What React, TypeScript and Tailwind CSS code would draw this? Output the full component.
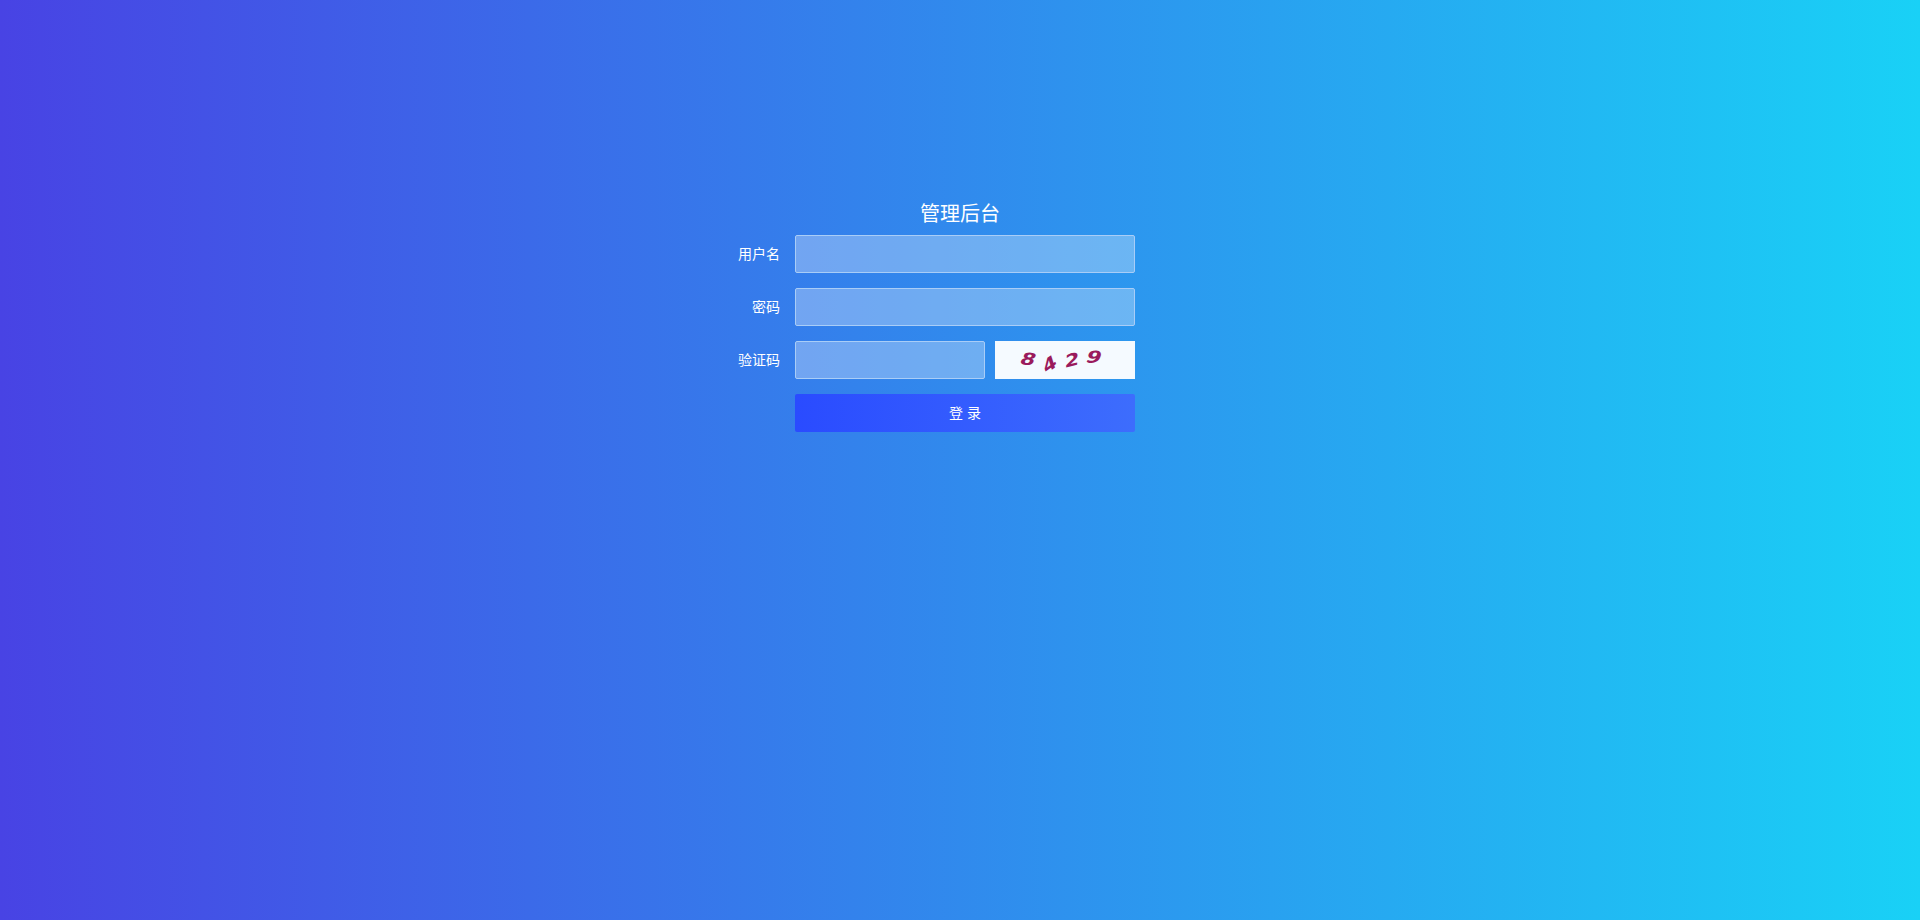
import React from 'react';

const FONT = { fontFamily: '"Liberation Sans", "Noto Sans CJK SC", sans-serif' };

function Captcha() {
  const chars = [
    { c: '8', cls: 'rotate-[6deg] translate-y-[0px]' },
    { c: '4', cls: '-rotate-[35deg] translate-y-[5px]' },
    { c: '2', cls: '-rotate-[14deg] translate-y-[1px]' },
    { c: '9', cls: 'rotate-[4deg] -translate-y-[2px]' },
  ];
  return (
    <div className="w-[140px] h-[38px] bg-[#f5faff] flex items-center justify-center gap-[10px] pr-[8px] select-none">
      {chars.map((ch, i) => (
        <span
          key={i}
          className={`inline-block text-[17px] font-black text-[#9a1a5c] skew-x-[-14deg] scale-x-[1.25] ${ch.cls}`}
          style={{ fontFamily: '"DejaVu Sans", sans-serif' }}
        >
          {ch.c}
        </span>
      ))}
    </div>
  );
}

function Row({ label, children }: { label: string; children: React.ReactNode }) {
  return (
    <div className="flex items-center">
      <label className="w-[60px] text-right text-[14px] text-white">{label}</label>
      <div className="ml-[15px] flex items-center gap-[10px]">{children}</div>
    </div>
  );
}

export default function App() {
  const inputCls =
    'h-[38px] bg-white/30 border border-[#a9cdf7] rounded-[2px] outline-none px-3 text-white text-[14px]';
  return (
    <div
      className="w-full h-[920px] bg-[linear-gradient(to_right,#4843e4,#19d1f6)] flex justify-center"
      style={FONT}
    >
      <div className="w-[480px] mt-[200px] flex flex-col">
        <h1 className="text-center text-[20px] leading-[28px] text-white font-normal">管理后台</h1>
        <div className="mt-[7px] flex flex-col gap-[15px]">
          <Row label="用户名">
            <input className={`${inputCls} w-[340px]`} />
          </Row>
          <Row label="密码">
            <input type="password" className={`${inputCls} w-[340px]`} />
          </Row>
          <Row label="验证码">
            <input className={`${inputCls} w-[190px]`} />
            <Captcha />
          </Row>
          <Row label="">
            <button className="w-[340px] h-[38px] rounded-[2px] bg-[linear-gradient(to_right,#2a4bff,#3d6dfd)] text-white text-[14px]">
              登 录
            </button>
          </Row>
        </div>
      </div>
    </div>
  );
}
